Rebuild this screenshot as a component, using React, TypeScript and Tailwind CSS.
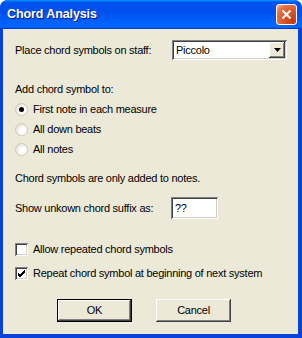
import React from 'react';

const font = { fontFamily: '"Liberation Sans", Arial, sans-serif' };

function Radio({ checked = false, label }: { checked?: boolean; label: string }) {
  return (
    <div className="flex items-center h-[20px]">
      <div className="w-[13px] h-[13px] rounded-full flex items-center justify-center border border-[#cdcabb] bg-[radial-gradient(circle_at_70%_70%,#ffffff_35%,#e6e3d6_75%,#c9c6b6_100%)]">
        {checked && <div className="w-[5px] h-[5px] rounded-full bg-black" />}
      </div>
      <span className="ml-[5px]">{label}</span>
    </div>
  );
}

function Check({ checked = false, label }: { checked?: boolean; label: string }) {
  return (
    <div className="flex items-center h-[20px]">
      <div className="w-[13px] h-[13px] bg-white flex items-center justify-center shadow-[inset_1px_1px_#808080,inset_-1px_-1px_#ffffff,inset_2px_2px_#404040,inset_-2px_-2px_#d4d0c8]">
        {checked && (
          <svg width="9" height="9" viewBox="0 0 9 9">
            <path d="M1 4 L3 6 L8 1 M1 5 L3 7 L8 2 M1 6 L3 8 L8 3" stroke="#000" strokeWidth="1" fill="none" />
          </svg>
        )}
      </div>
      <span className="ml-[5px]">{label}</span>
    </div>
  );
}

export default function App() {
  return (
    <div className="w-[302px] h-[338px] bg-white" style={font}>
      <div className="w-full h-full flex flex-col rounded-t-[8px] overflow-hidden bg-[#0842d6]">
        {/* Title bar */}
        <div className="h-[29px] flex items-center pl-[7px] pr-[5px] bg-[linear-gradient(180deg,#0997ff,#0053ee_8%,#0050ee_40%,#0066ff_88%,#0066ff_93%,#005bff_95%,#003dd7_96%,#003dd7)]">
          <span className="text-white font-bold text-[12.5px] tracking-[-0.1px] [text-shadow:1px_1px_#0a1883]">Chord Analysis</span>
          <div className="ml-auto w-[21px] h-[21px] rounded-[3px] border border-white flex items-center justify-center bg-[radial-gradient(circle_at_85%_85%,#c43a12_0%,#dc5a2c_50%,#e77a55_80%,#f7c2ae_100%)]">
            <svg width="11" height="11" viewBox="0 0 11 11">
              <path d="M1.5 1.5 L9.5 9.5 M9.5 1.5 L1.5 9.5" stroke="#fff" strokeWidth="2" />
            </svg>
          </div>
        </div>

        {/* Client area */}
        <div className="flex-1 ml-[3px] mr-[4px] mb-[4px] bg-[#ece9d8] text-[11px] tracking-[-0.25px] text-black leading-[13px] flex flex-col pl-[12px] pt-[11px]">
          <div className="flex items-center h-[20px]">
            <span className="w-[157px]">Place chord symbols on staff:</span>
            <div className="w-[115px] h-[20px] bg-white flex items-center pl-[4px] pr-[2px] shadow-[inset_1px_1px_#808080,inset_-1px_-1px_#ffffff,inset_2px_2px_#404040,inset_-2px_-2px_#d4d0c8]">
              <span>Piccolo</span>
              <div className="ml-auto w-[16px] h-[16px] bg-[#ece9d8] flex items-center justify-center shadow-[inset_-1px_-1px_#404040,inset_1px_1px_#ffffff,inset_-2px_-2px_#808080,inset_2px_2px_#ece9d8]">
                <svg width="7" height="4" viewBox="0 0 7 4">
                  <path d="M0 0 H7 L3.5 4 Z" fill="#000" />
                </svg>
              </div>
            </div>
          </div>

          <div className="mt-[23px] h-[13px]">Add chord symbol to:</div>
          <div className="mt-[3px] flex flex-col">
            <Radio checked label="First note in each measure" />
            <Radio label="All down beats" />
            <Radio label="All notes" />
          </div>

          <div className="mt-[13px] h-[13px]">Chord symbols are only added to notes.</div>

          <div className="mt-[12px] flex items-center h-[22px]">
            <span className="w-[156px]">Show unkown chord suffix as:</span>
            <div className="w-[47px] h-[22px] bg-white flex items-center pl-[4px] shadow-[inset_1px_1px_#808080,inset_-1px_-1px_#ffffff,inset_2px_2px_#404040,inset_-2px_-2px_#d4d0c8]">
              ??
            </div>
          </div>

          <div className="mt-[20px] flex flex-col gap-[4px]">
            <Check label="Allow repeated chord symbols" />
            <Check checked label="Repeat chord symbol at beginning of next system" />
          </div>

          <div className="mt-[16px] flex pl-[42px] gap-[24px]">
            <div className="w-[75px] h-[23px] border border-black flex items-center justify-center shadow-[inset_-1px_-1px_#404040,inset_1px_1px_#ffffff,inset_-2px_-2px_#808080]">
              OK
            </div>
            <div className="w-[75px] h-[23px] flex items-center justify-center shadow-[inset_-1px_-1px_#404040,inset_1px_1px_#ffffff,inset_-2px_-2px_#808080,inset_2px_2px_#ece9d8]">
              Cancel
            </div>
          </div>
        </div>
      </div>
    </div>
  );
}
